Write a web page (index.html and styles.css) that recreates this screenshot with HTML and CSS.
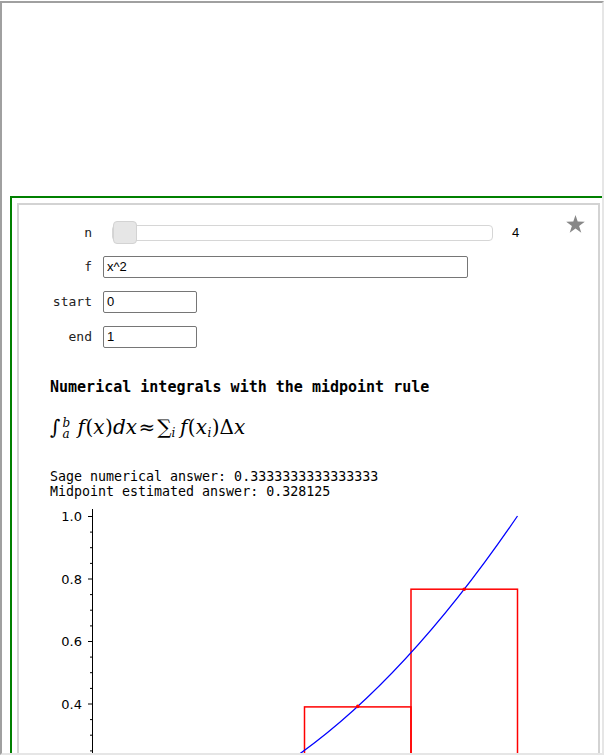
FILE: index.html
```html
<!DOCTYPE html>
<html>
<head>
<meta charset="utf-8">
<link rel="stylesheet" href="styles.css">
</head>
<body>
<div class="frame">
  <div class="green">
    <div class="cell">
      <svg class="star" width="19" height="18" viewBox="0 0 19 18"><polygon points="9.5,0 11.7,6.6 18.8,6.7 13.1,10.9 15.3,17.8 9.5,13.6 3.7,17.8 5.9,10.9 0.2,6.7 7.3,6.6" fill="#888"/></svg>
      <div class="row first">
        <span class="label">n</span>
        <div class="slider"><span class="handle"></span></div>
        <span class="value">4</span>
      </div>
      <div class="row">
        <span class="label">f</span>
        <input class="inp wide" type="text" value="x^2">
      </div>
      <div class="row">
        <span class="label">start</span>
        <input class="inp short" type="text" value="0">
      </div>
      <div class="row">
        <span class="label">end</span>
        <input class="inp short" type="text" value="1">
      </div>
      <h3 class="title">Numerical integrals with the midpoint rule</h3>
      <div class="math"><span class="up big">∫</span><span class="limits"><span class="it">b</span><span class="it">a</span></span><span class="it">f</span><span class="up">(</span><span class="it">x</span><span class="up">)</span><span class="it">dx</span><span class="up rel">≈</span><span class="up sum">∑</span><sub class="it">i</sub><span class="it sp">f</span><span class="up">(</span><span class="it">x</span><sub class="it">i</sub><span class="up">)Δ</span><span class="it">x</span></div>
      <pre class="out">Sage numerical answer: 0.3333333333333333
Midpoint estimated answer: 0.328125</pre>
      <svg class="plot" width="548" height="260" viewBox="0 0 548 260">
        <g stroke="#000" stroke-width="1" fill="none">
          <line x1="42.5" y1="10" x2="42.5" y2="260"/>
          <line x1="38" y1="17.5" x2="42.5" y2="17.5"/>
          <line x1="38" y1="80" x2="42.5" y2="80"/>
          <line x1="38" y1="142.5" x2="42.5" y2="142.5"/>
          <line x1="38" y1="205" x2="42.5" y2="205"/>
          <line x1="40" y1="33.1" x2="42.5" y2="33.1"/>
          <line x1="40" y1="48.7" x2="42.5" y2="48.7"/>
          <line x1="40" y1="64.4" x2="42.5" y2="64.4"/>
          <line x1="40" y1="95.6" x2="42.5" y2="95.6"/>
          <line x1="40" y1="111.2" x2="42.5" y2="111.2"/>
          <line x1="40" y1="126.9" x2="42.5" y2="126.9"/>
          <line x1="40" y1="158.1" x2="42.5" y2="158.1"/>
          <line x1="40" y1="173.7" x2="42.5" y2="173.7"/>
          <line x1="40" y1="189.4" x2="42.5" y2="189.4"/>
          <line x1="40" y1="220.6" x2="42.5" y2="220.6"/>
          <line x1="40" y1="236.2" x2="42.5" y2="236.2"/>
          <line x1="40" y1="251.9" x2="42.5" y2="251.9"/>
        </g>
        <g class="ticks" font-size="13" text-anchor="end" fill="#000">
          <text x="32" y="22">1.0</text>
          <text x="32" y="84.5">0.8</text>
          <text x="32" y="147">0.6</text>
          <text x="32" y="209.5">0.4</text>
        </g>
        <g stroke="#f00" stroke-width="1.5" fill="none">
          <rect x="41.5" y="324.6" width="106.5" height="10"/>
          <rect x="148" y="285.6" width="106.5" height="50"/>
          <rect x="254.5" y="207.9" width="106.5" height="130"/>
          <rect x="361" y="90.2" width="106.5" height="250"/>
        </g>
        <path d="M41.5 329.5 Q254.5 329.5 467.5 17" stroke="#00f" stroke-width="1.3" fill="none"/>
        <g fill="#f00">
          <circle cx="307.75" cy="207.4" r="1.8"/>
          <circle cx="414.25" cy="90.2" r="1.8"/>
        </g>
      </svg>
    </div>
  </div>
</div>
</body>
</html>
```
FILE: styles.css
```css
html, body {
  margin: 0;
  padding: 0;
  background: #fff;
}
.frame {
  margin-top: 1px;
  width: 600px;
  height: 750px;
  border-left: 2px solid #a0a0a0;
  border-top: 2px solid #a0a0a0;
  border-right: 2px solid #e6e6e6;
  border-bottom: 2px solid #e6e6e6;
  overflow: hidden;
}
.green {
  margin: 193px 0 0 8px;
  width: 593px;
  padding: 5px;
  border: 2px solid #008000;
}
.cell {
  position: relative;
  box-sizing: border-box;
  width: 583px;
  border: 2px solid #d3d3d3;
  padding: 11px 0 0 31px;
  min-height: 700px;
}
.star {
  position: absolute;
  right: 13px;
  top: 10px;
}
.row {
  display: flex;
  align-items: center;
  height: 35px;
}
.row.first {
  height: 33px;
}
.label {
  width: 42px;
  margin-right: 11px;
  text-align: right;
  font-family: "DejaVu Sans Mono", monospace;
  font-size: 13px;
  color: #222;
  white-space: nowrap;
}
.slider {
  position: relative;
  margin-left: 9px;
  box-sizing: border-box;
  width: 381px;
  height: 16px;
  border: 1px solid #d6d6d6;
  border-radius: 4px;
  background: #fff;
}
.handle {
  position: absolute;
  left: 0;
  top: -5px;
  box-sizing: border-box;
  width: 24px;
  height: 23px;
  background: #e6e6e6;
  border: 1px solid #d3d3d3;
  border-radius: 4px;
}
.value {
  margin-left: 19px;
  font-family: "Liberation Sans", Arial, sans-serif;
  font-size: 13px;
  color: #000;
}
.inp {
  box-sizing: border-box;
  height: 22px;
  border: 1px solid #767676;
  border-radius: 2px;
  padding: 1px 3px;
  font-family: "Liberation Sans", Arial, sans-serif;
  font-size: 13px;
  color: #000;
  background: #fff;
  outline: none;
}
.wide {
  width: 365px;
}
.short {
  width: 94px;
}
.title {
  margin: 24px 0 0 0;
  font-family: "DejaVu Sans Mono", monospace;
  font-weight: bold;
  font-size: 15px;
  line-height: 18px;
  color: #000;
}
.math {
  margin-top: 19px;
  height: 24px;
  line-height: 24px;
  font-family: "DejaVu Serif", serif;
  font-size: 20px;
  color: #000;
  white-space: nowrap;
}
.math .it {
  font-style: italic;
  margin-right: 0.5px;
}
.math .up {
  font-style: normal;
}
.math .rel {
  margin: 0 1px;
}
.math .sum {
  margin-left: 1px;
}
.math .sp {
  margin-left: 4px;
}
.math sub {
  font-size: 12px;
  vertical-align: -3px;
  line-height: 0;
}
.limits {
  display: inline-flex;
  flex-direction: column;
  vertical-align: middle;
  font-size: 12px;
  line-height: 11px;
  margin: 0 7px 0 2px;
}
.out {
  margin: 30px 0 0 0;
  font-family: "DejaVu Sans Mono", monospace;
  font-size: 13.3px;
  line-height: 15px;
  color: #000;
}
.plot {
  display: block;
}
.ticks {
  font-family: "DejaVu Sans", sans-serif;
}
```
